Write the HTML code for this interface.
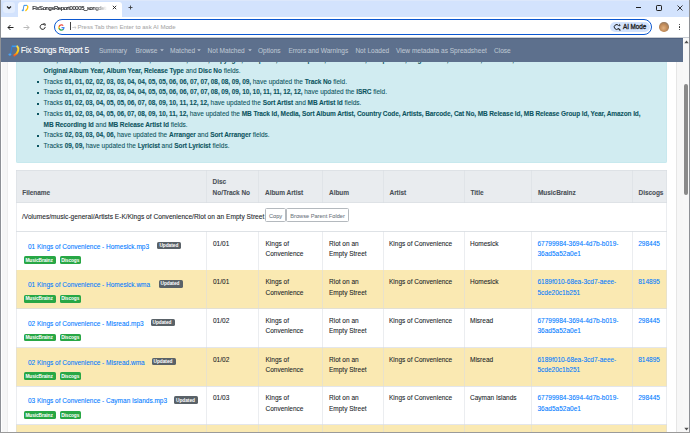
<!DOCTYPE html>
<html><head><meta charset="utf-8"><style>
html,body{margin:0;padding:0;}
body{width:690px;height:433px;overflow:hidden;position:relative;background:#fff;font-family:"Liberation Sans", sans-serif;}
.t{position:absolute;white-space:nowrap;font-family:"Liberation Sans", sans-serif;-webkit-text-stroke:0.08px currentColor;}
.t b{font-weight:bold;letter-spacing:-0.1px;}
.r{position:absolute;}
.btn{position:absolute;box-sizing:border-box;border:0.7px solid #b4b9be;border-radius:1.5px;background:#fff;}
.bdg{position:absolute;border-radius:1.6px;}
.caret{display:inline-block;width:0;height:0;margin-left:1.9px;vertical-align:2.1px;border-top:2px solid;border-left:1.8px solid transparent;border-right:1.8px solid transparent;}
</style></head><body>
<div class="r" style="left:1.00px;top:38.00px;width:682.00px;height:395.00px;background:#ffffff;"></div>
<div class="r" style="left:2.00px;top:38.00px;width:5.60px;height:395.00px;background:#f6f6f6;"></div>
<div class="r" style="left:7.40px;top:38.00px;width:0.60px;height:395.00px;background:#eeeeee;"></div>
<div class="r" style="left:676.00px;top:38.00px;width:0.80px;height:395.00px;background:#e6e6e6;"></div>
<div class="r" style="left:676.80px;top:38.00px;width:6.20px;height:395.00px;background:#f7f7f7;"></div>
<div class="r" style="left:16.00px;top:40.00px;width:651.00px;height:122.60px;background:#d1ecf1;border-radius:2px;box-shadow:inset 0 0 0 0.5px #bee5eb;"></div>
<div class="t" style="left:43.60px;top:57.30px;font-size:6.5px;line-height:6.5px;font-weight:normal;color:#0c5460;word-spacing:0px;"><b>Title, Album, Artist, Track, Sort Title, Sort Album, Genre, Copyright, Composer, Sort Composer, Album Artist, Compilation, Original Year, Sort Artist, Publisher,</b></div>
<div class="t" style="left:43.60px;top:68.00px;font-size:6.5px;line-height:6.5px;font-weight:normal;color:#0c5460;word-spacing:0px;"><b>Original Album Year, Album Year, Release Type</b> and <b>Disc No</b> fields.</div>
<div class="t" style="left:43.60px;top:78.70px;font-size:6.5px;line-height:6.5px;font-weight:normal;color:#0c5460;word-spacing:0px;">Tracks <b>01, 01, 02, 02, 03, 03, 04, 04, 05, 05, 06, 06, 07, 07, 08, 08, 09, 09,</b> have updated the <b>Track No</b> field.</div>
<div class="t" style="left:43.60px;top:89.40px;font-size:6.5px;line-height:6.5px;font-weight:normal;color:#0c5460;word-spacing:0px;">Tracks <b>01, 01, 02, 02, 03, 03, 04, 04, 05, 05, 06, 06, 07, 07, 08, 09, 09, 10, 10, 11, 11, 12, 12,</b> have updated the <b>ISRC</b> field.</div>
<div class="t" style="left:43.60px;top:100.10px;font-size:6.5px;line-height:6.5px;font-weight:normal;color:#0c5460;word-spacing:0px;">Tracks <b>01, 02, 03, 04, 05, 05, 06, 07, 08, 09, 10, 11, 12, 12,</b> have updated the <b>Sort Artist</b> and <b>MB Artist Id</b> fields.</div>
<div class="t" style="left:43.60px;top:110.80px;font-size:6.5px;line-height:6.5px;font-weight:normal;color:#0c5460;word-spacing:0px;">Tracks <b>01, 02, 03, 04, 05, 06, 07, 08, 09, 10, 11, 12,</b> have updated the <b>MB Track Id, Media, Sort Album Artist, Country Code, Artists, Barcode, Cat No, MB Release Id, MB Release Group Id, Year, Amazon Id,</b></div>
<div class="t" style="left:43.60px;top:121.50px;font-size:6.5px;line-height:6.5px;font-weight:normal;color:#0c5460;word-spacing:0px;"><b>MB Recording Id</b> and <b>MB Release Artist Id</b> fields.</div>
<div class="t" style="left:43.60px;top:132.20px;font-size:6.5px;line-height:6.5px;font-weight:normal;color:#0c5460;word-spacing:0px;">Tracks <b>02, 03, 03, 04, 06,</b> have updated the <b>Arranger</b> and <b>Sort Arranger</b> fields.</div>
<div class="t" style="left:43.60px;top:142.90px;font-size:6.5px;line-height:6.5px;font-weight:normal;color:#0c5460;word-spacing:0px;">Tracks <b>09, 09,</b> have updated the <b>Lyricist</b> and <b>Sort Lyricist</b> fields.</div>
<div class="r" style="left:37.00px;top:81.00px;width:1.60px;height:1.60px;background:#0c5460;"></div>
<div class="r" style="left:37.00px;top:92.00px;width:1.60px;height:1.60px;background:#0c5460;"></div>
<div class="r" style="left:37.00px;top:103.00px;width:1.60px;height:1.60px;background:#0c5460;"></div>
<div class="r" style="left:37.00px;top:113.00px;width:1.60px;height:1.60px;background:#0c5460;"></div>
<div class="r" style="left:37.00px;top:135.00px;width:1.60px;height:1.60px;background:#0c5460;"></div>
<div class="r" style="left:37.00px;top:145.00px;width:1.60px;height:1.60px;background:#0c5460;"></div>
<div class="r" style="left:16.00px;top:170.00px;width:651.00px;height:33.00px;background:#e9ecef;"></div>
<div class="r" style="left:16.00px;top:170.00px;width:651.00px;height:0.60px;background:#dee2e6;"></div>
<div class="r" style="left:16.00px;top:202.20px;width:651.00px;height:1.00px;background:#dee2e6;"></div>
<div class="t" style="left:22.30px;top:189.60px;font-size:6.5px;line-height:6.5px;font-weight:bold;color:#495057;letter-spacing:-0.05px;">Filename</div>
<div class="t" style="left:212.60px;top:179.00px;font-size:6.5px;line-height:6.5px;font-weight:bold;color:#495057;letter-spacing:-0.05px;">Disc</div>
<div class="t" style="left:212.60px;top:189.60px;font-size:6.5px;line-height:6.5px;font-weight:bold;color:#495057;letter-spacing:-0.05px;">No/Track No</div>
<div class="t" style="left:265.00px;top:189.60px;font-size:6.5px;line-height:6.5px;font-weight:bold;color:#495057;letter-spacing:-0.05px;">Album Artist</div>
<div class="t" style="left:329.00px;top:189.60px;font-size:6.5px;line-height:6.5px;font-weight:bold;color:#495057;letter-spacing:-0.05px;">Album</div>
<div class="t" style="left:389.50px;top:189.60px;font-size:6.5px;line-height:6.5px;font-weight:bold;color:#495057;letter-spacing:-0.05px;">Artist</div>
<div class="t" style="left:470.50px;top:189.60px;font-size:6.5px;line-height:6.5px;font-weight:bold;color:#495057;letter-spacing:-0.05px;">Title</div>
<div class="t" style="left:538.00px;top:189.60px;font-size:6.5px;line-height:6.5px;font-weight:bold;color:#495057;letter-spacing:-0.05px;">MusicBrainz</div>
<div class="t" style="left:638.50px;top:189.60px;font-size:6.5px;line-height:6.5px;font-weight:bold;color:#495057;letter-spacing:-0.05px;">Discogs</div>
<div class="r" style="left:16.00px;top:231.00px;width:651.00px;height:0.60px;background:#dee2e6;"></div>
<div class="t" style="left:22.00px;top:213.79px;font-size:6.63px;line-height:6.63px;font-weight:normal;color:#212529;">/Volumes/music-general/Artists E-K/Kings of Convenience/Riot on an Empty Street</div>
<div class="btn" style="left:265px;top:208.3px;width:20.8px;height:13.8px;"></div>
<div class="t" style="left:269.00px;top:214.22px;font-size:5.65px;line-height:5.65px;font-weight:normal;color:#6c757d;-webkit-text-stroke:0.05px currentColor;">Copy</div>
<div class="btn" style="left:286.4px;top:208.3px;width:62.6px;height:13.8px;"></div>
<div class="t" style="left:290.30px;top:214.22px;font-size:5.65px;line-height:5.65px;font-weight:normal;color:#6c757d;-webkit-text-stroke:0.05px currentColor;">Browse Parent Folder</div>
<div class="r" style="left:16.00px;top:269.60px;width:651.00px;height:0.70px;background:rgba(215,220,226,0.7);"></div>
<div class="t" style="left:28.00px;top:243.50px;font-size:6.5px;line-height:6.5px;font-weight:normal;color:#007bff;">01 Kings of Convenience - Homesick.mp3</div>
<div class="bdg" style="left:157.40px;top:241.50px;width:24px;height:7.5px;background:#5a6268;"></div>
<div class="t" style="left:159.40px;top:243.74px;font-size:4.8px;line-height:4.8px;font-weight:bold;color:#ffffff;letter-spacing:-0.04px;-webkit-text-stroke:0;">Updated</div>
<div class="bdg" style="left:24px;top:256.30px;width:31.8px;height:7.7px;background:#28a745;"></div>
<div class="t" style="left:25.40px;top:258.74px;font-size:4.8px;line-height:4.8px;font-weight:bold;color:#ffffff;letter-spacing:-0.08px;-webkit-text-stroke:0;">MusicBrainz</div>
<div class="bdg" style="left:59.6px;top:256.30px;width:21.3px;height:7.7px;background:#28a745;"></div>
<div class="t" style="left:61.20px;top:258.74px;font-size:4.8px;line-height:4.8px;font-weight:bold;color:#ffffff;letter-spacing:-0.08px;-webkit-text-stroke:0;">Discogs</div>
<div class="t" style="left:213.00px;top:240.50px;font-size:6.5px;line-height:6.5px;font-weight:normal;color:#212529;">01/01</div>
<div class="t" style="left:265.50px;top:240.50px;font-size:6.5px;line-height:6.5px;font-weight:normal;color:#212529;">Kings of</div>
<div class="t" style="left:265.50px;top:250.90px;font-size:6.5px;line-height:6.5px;font-weight:normal;color:#212529;">Convenience</div>
<div class="t" style="left:329.00px;top:240.50px;font-size:6.5px;line-height:6.5px;font-weight:normal;color:#212529;">Riot on an</div>
<div class="t" style="left:329.00px;top:250.90px;font-size:6.5px;line-height:6.5px;font-weight:normal;color:#212529;">Empty Street</div>
<div class="t" style="left:389.00px;top:240.50px;font-size:6.5px;line-height:6.5px;font-weight:normal;color:#212529;">Kings of Convenience</div>
<div class="t" style="left:470.00px;top:240.50px;font-size:6.5px;line-height:6.5px;font-weight:normal;color:#212529;">Homesick</div>
<div class="t" style="left:537.50px;top:240.50px;font-size:6.5px;line-height:6.5px;font-weight:normal;color:#007bff;">67799984-3694-4d7b-b019-</div>
<div class="t" style="left:537.50px;top:250.90px;font-size:6.5px;line-height:6.5px;font-weight:normal;color:#007bff;">36ad5a52a0e1</div>
<div class="t" style="left:638.20px;top:240.50px;font-size:6.5px;line-height:6.5px;font-weight:normal;color:#007bff;">298445</div>
<div class="r" style="left:16.00px;top:270.30px;width:651.00px;height:38.40px;background:#fae9b2;"></div>
<div class="r" style="left:16.00px;top:308.30px;width:651.00px;height:0.70px;background:rgba(215,220,226,0.7);"></div>
<div class="t" style="left:28.00px;top:282.20px;font-size:6.5px;line-height:6.5px;font-weight:normal;color:#007bff;">01 Kings of Convenience - Homesick.wma</div>
<div class="bdg" style="left:158.50px;top:280.20px;width:24px;height:7.5px;background:#5a6268;"></div>
<div class="t" style="left:160.50px;top:282.44px;font-size:4.8px;line-height:4.8px;font-weight:bold;color:#ffffff;letter-spacing:-0.04px;-webkit-text-stroke:0;">Updated</div>
<div class="bdg" style="left:24px;top:295.00px;width:31.8px;height:7.7px;background:#28a745;"></div>
<div class="t" style="left:25.40px;top:297.44px;font-size:4.8px;line-height:4.8px;font-weight:bold;color:#ffffff;letter-spacing:-0.08px;-webkit-text-stroke:0;">MusicBrainz</div>
<div class="bdg" style="left:59.6px;top:295.00px;width:21.3px;height:7.7px;background:#28a745;"></div>
<div class="t" style="left:61.20px;top:297.44px;font-size:4.8px;line-height:4.8px;font-weight:bold;color:#ffffff;letter-spacing:-0.08px;-webkit-text-stroke:0;">Discogs</div>
<div class="t" style="left:213.00px;top:279.20px;font-size:6.5px;line-height:6.5px;font-weight:normal;color:#212529;">01/01</div>
<div class="t" style="left:265.50px;top:279.20px;font-size:6.5px;line-height:6.5px;font-weight:normal;color:#212529;">Kings of</div>
<div class="t" style="left:265.50px;top:289.60px;font-size:6.5px;line-height:6.5px;font-weight:normal;color:#212529;">Convenience</div>
<div class="t" style="left:329.00px;top:279.20px;font-size:6.5px;line-height:6.5px;font-weight:normal;color:#212529;">Riot on an</div>
<div class="t" style="left:329.00px;top:289.60px;font-size:6.5px;line-height:6.5px;font-weight:normal;color:#212529;">Empty Street</div>
<div class="t" style="left:389.00px;top:279.20px;font-size:6.5px;line-height:6.5px;font-weight:normal;color:#212529;">Kings of Convenience</div>
<div class="t" style="left:470.00px;top:279.20px;font-size:6.5px;line-height:6.5px;font-weight:normal;color:#212529;">Homesick</div>
<div class="t" style="left:537.50px;top:279.20px;font-size:6.5px;line-height:6.5px;font-weight:normal;color:#007bff;">6189f010-68ea-3cd7-aeee-</div>
<div class="t" style="left:537.50px;top:289.60px;font-size:6.5px;line-height:6.5px;font-weight:normal;color:#007bff;">5cde20c1b251</div>
<div class="t" style="left:638.20px;top:279.20px;font-size:6.5px;line-height:6.5px;font-weight:normal;color:#007bff;">814895</div>
<div class="r" style="left:16.00px;top:347.00px;width:651.00px;height:0.70px;background:rgba(215,220,226,0.7);"></div>
<div class="t" style="left:28.00px;top:320.90px;font-size:6.5px;line-height:6.5px;font-weight:normal;color:#007bff;">02 Kings of Convenience - Misread.mp3</div>
<div class="bdg" style="left:150.50px;top:318.90px;width:24px;height:7.5px;background:#5a6268;"></div>
<div class="t" style="left:152.50px;top:321.14px;font-size:4.8px;line-height:4.8px;font-weight:bold;color:#ffffff;letter-spacing:-0.04px;-webkit-text-stroke:0;">Updated</div>
<div class="bdg" style="left:24px;top:333.70px;width:31.8px;height:7.7px;background:#28a745;"></div>
<div class="t" style="left:25.40px;top:336.14px;font-size:4.8px;line-height:4.8px;font-weight:bold;color:#ffffff;letter-spacing:-0.08px;-webkit-text-stroke:0;">MusicBrainz</div>
<div class="bdg" style="left:59.6px;top:333.70px;width:21.3px;height:7.7px;background:#28a745;"></div>
<div class="t" style="left:61.20px;top:336.14px;font-size:4.8px;line-height:4.8px;font-weight:bold;color:#ffffff;letter-spacing:-0.08px;-webkit-text-stroke:0;">Discogs</div>
<div class="t" style="left:213.00px;top:317.90px;font-size:6.5px;line-height:6.5px;font-weight:normal;color:#212529;">01/02</div>
<div class="t" style="left:265.50px;top:317.90px;font-size:6.5px;line-height:6.5px;font-weight:normal;color:#212529;">Kings of</div>
<div class="t" style="left:265.50px;top:328.30px;font-size:6.5px;line-height:6.5px;font-weight:normal;color:#212529;">Convenience</div>
<div class="t" style="left:329.00px;top:317.90px;font-size:6.5px;line-height:6.5px;font-weight:normal;color:#212529;">Riot on an</div>
<div class="t" style="left:329.00px;top:328.30px;font-size:6.5px;line-height:6.5px;font-weight:normal;color:#212529;">Empty Street</div>
<div class="t" style="left:389.00px;top:317.90px;font-size:6.5px;line-height:6.5px;font-weight:normal;color:#212529;">Kings of Convenience</div>
<div class="t" style="left:470.00px;top:317.90px;font-size:6.5px;line-height:6.5px;font-weight:normal;color:#212529;">Misread</div>
<div class="t" style="left:537.50px;top:317.90px;font-size:6.5px;line-height:6.5px;font-weight:normal;color:#007bff;">67799984-3694-4d7b-b019-</div>
<div class="t" style="left:537.50px;top:328.30px;font-size:6.5px;line-height:6.5px;font-weight:normal;color:#007bff;">36ad5a52a0e1</div>
<div class="t" style="left:638.20px;top:317.90px;font-size:6.5px;line-height:6.5px;font-weight:normal;color:#007bff;">298445</div>
<div class="r" style="left:16.00px;top:347.70px;width:651.00px;height:38.40px;background:#fae9b2;"></div>
<div class="r" style="left:16.00px;top:385.70px;width:651.00px;height:0.70px;background:rgba(215,220,226,0.7);"></div>
<div class="t" style="left:28.00px;top:359.60px;font-size:6.5px;line-height:6.5px;font-weight:normal;color:#007bff;">02 Kings of Convenience - Misread.wma</div>
<div class="bdg" style="left:151.50px;top:357.60px;width:24px;height:7.5px;background:#5a6268;"></div>
<div class="t" style="left:153.50px;top:359.84px;font-size:4.8px;line-height:4.8px;font-weight:bold;color:#ffffff;letter-spacing:-0.04px;-webkit-text-stroke:0;">Updated</div>
<div class="bdg" style="left:24px;top:372.40px;width:31.8px;height:7.7px;background:#28a745;"></div>
<div class="t" style="left:25.40px;top:374.84px;font-size:4.8px;line-height:4.8px;font-weight:bold;color:#ffffff;letter-spacing:-0.08px;-webkit-text-stroke:0;">MusicBrainz</div>
<div class="bdg" style="left:59.6px;top:372.40px;width:21.3px;height:7.7px;background:#28a745;"></div>
<div class="t" style="left:61.20px;top:374.84px;font-size:4.8px;line-height:4.8px;font-weight:bold;color:#ffffff;letter-spacing:-0.08px;-webkit-text-stroke:0;">Discogs</div>
<div class="t" style="left:213.00px;top:356.60px;font-size:6.5px;line-height:6.5px;font-weight:normal;color:#212529;">01/02</div>
<div class="t" style="left:265.50px;top:356.60px;font-size:6.5px;line-height:6.5px;font-weight:normal;color:#212529;">Kings of</div>
<div class="t" style="left:265.50px;top:367.00px;font-size:6.5px;line-height:6.5px;font-weight:normal;color:#212529;">Convenience</div>
<div class="t" style="left:329.00px;top:356.60px;font-size:6.5px;line-height:6.5px;font-weight:normal;color:#212529;">Riot on an</div>
<div class="t" style="left:329.00px;top:367.00px;font-size:6.5px;line-height:6.5px;font-weight:normal;color:#212529;">Empty Street</div>
<div class="t" style="left:389.00px;top:356.60px;font-size:6.5px;line-height:6.5px;font-weight:normal;color:#212529;">Kings of Convenience</div>
<div class="t" style="left:470.00px;top:356.60px;font-size:6.5px;line-height:6.5px;font-weight:normal;color:#212529;">Misread</div>
<div class="t" style="left:537.50px;top:356.60px;font-size:6.5px;line-height:6.5px;font-weight:normal;color:#007bff;">6189f010-68ea-3cd7-aeee-</div>
<div class="t" style="left:537.50px;top:367.00px;font-size:6.5px;line-height:6.5px;font-weight:normal;color:#007bff;">5cde20c1b251</div>
<div class="t" style="left:638.20px;top:356.60px;font-size:6.5px;line-height:6.5px;font-weight:normal;color:#007bff;">814895</div>
<div class="r" style="left:16.00px;top:424.40px;width:651.00px;height:0.70px;background:rgba(215,220,226,0.7);"></div>
<div class="t" style="left:28.00px;top:398.30px;font-size:6.5px;line-height:6.5px;font-weight:normal;color:#007bff;">03 Kings of Convenience - Cayman Islands.mp3</div>
<div class="bdg" style="left:174.00px;top:396.30px;width:24px;height:7.5px;background:#5a6268;"></div>
<div class="t" style="left:176.00px;top:398.54px;font-size:4.8px;line-height:4.8px;font-weight:bold;color:#ffffff;letter-spacing:-0.04px;-webkit-text-stroke:0;">Updated</div>
<div class="bdg" style="left:24px;top:411.10px;width:31.8px;height:7.7px;background:#28a745;"></div>
<div class="t" style="left:25.40px;top:413.54px;font-size:4.8px;line-height:4.8px;font-weight:bold;color:#ffffff;letter-spacing:-0.08px;-webkit-text-stroke:0;">MusicBrainz</div>
<div class="bdg" style="left:59.6px;top:411.10px;width:21.3px;height:7.7px;background:#28a745;"></div>
<div class="t" style="left:61.20px;top:413.54px;font-size:4.8px;line-height:4.8px;font-weight:bold;color:#ffffff;letter-spacing:-0.08px;-webkit-text-stroke:0;">Discogs</div>
<div class="t" style="left:213.00px;top:395.30px;font-size:6.5px;line-height:6.5px;font-weight:normal;color:#212529;">01/03</div>
<div class="t" style="left:265.50px;top:395.30px;font-size:6.5px;line-height:6.5px;font-weight:normal;color:#212529;">Kings of</div>
<div class="t" style="left:265.50px;top:405.70px;font-size:6.5px;line-height:6.5px;font-weight:normal;color:#212529;">Convenience</div>
<div class="t" style="left:329.00px;top:395.30px;font-size:6.5px;line-height:6.5px;font-weight:normal;color:#212529;">Riot on an</div>
<div class="t" style="left:329.00px;top:405.70px;font-size:6.5px;line-height:6.5px;font-weight:normal;color:#212529;">Empty Street</div>
<div class="t" style="left:389.00px;top:395.30px;font-size:6.5px;line-height:6.5px;font-weight:normal;color:#212529;">Kings of Convenience</div>
<div class="t" style="left:470.00px;top:395.30px;font-size:6.5px;line-height:6.5px;font-weight:normal;color:#212529;">Cayman Islands</div>
<div class="t" style="left:537.50px;top:395.30px;font-size:6.5px;line-height:6.5px;font-weight:normal;color:#007bff;">67799984-3694-4d7b-b019-</div>
<div class="t" style="left:537.50px;top:405.70px;font-size:6.5px;line-height:6.5px;font-weight:normal;color:#007bff;">36ad5a52a0e1</div>
<div class="t" style="left:638.20px;top:395.30px;font-size:6.5px;line-height:6.5px;font-weight:normal;color:#007bff;">298445</div>
<div class="r" style="left:16.00px;top:425.10px;width:651.00px;height:38.40px;background:#fae9b2;"></div>
<div class="r" style="left:16.00px;top:463.10px;width:651.00px;height:0.70px;background:rgba(215,220,226,0.7);"></div>
<div class="t" style="left:28.00px;top:437.00px;font-size:6.5px;line-height:6.5px;font-weight:normal;color:#007bff;">04 Kings of Convenience - Love Is No Big Truth.mp3</div>
<div class="bdg" style="left:190.00px;top:435.00px;width:24px;height:7.5px;background:#5a6268;"></div>
<div class="t" style="left:192.00px;top:437.24px;font-size:4.8px;line-height:4.8px;font-weight:bold;color:#ffffff;letter-spacing:-0.04px;-webkit-text-stroke:0;">Updated</div>
<div class="bdg" style="left:24px;top:449.80px;width:31.8px;height:7.7px;background:#28a745;"></div>
<div class="t" style="left:25.40px;top:452.24px;font-size:4.8px;line-height:4.8px;font-weight:bold;color:#ffffff;letter-spacing:-0.08px;-webkit-text-stroke:0;">MusicBrainz</div>
<div class="bdg" style="left:59.6px;top:449.80px;width:21.3px;height:7.7px;background:#28a745;"></div>
<div class="t" style="left:61.20px;top:452.24px;font-size:4.8px;line-height:4.8px;font-weight:bold;color:#ffffff;letter-spacing:-0.08px;-webkit-text-stroke:0;">Discogs</div>
<div class="t" style="left:213.00px;top:434.00px;font-size:6.5px;line-height:6.5px;font-weight:normal;color:#212529;">01/04</div>
<div class="t" style="left:265.50px;top:434.00px;font-size:6.5px;line-height:6.5px;font-weight:normal;color:#212529;">Kings of</div>
<div class="t" style="left:265.50px;top:444.40px;font-size:6.5px;line-height:6.5px;font-weight:normal;color:#212529;">Convenience</div>
<div class="t" style="left:329.00px;top:434.00px;font-size:6.5px;line-height:6.5px;font-weight:normal;color:#212529;">Riot on an</div>
<div class="t" style="left:329.00px;top:444.40px;font-size:6.5px;line-height:6.5px;font-weight:normal;color:#212529;">Empty Street</div>
<div class="t" style="left:389.00px;top:434.00px;font-size:6.5px;line-height:6.5px;font-weight:normal;color:#212529;">Kings of Convenience</div>
<div class="t" style="left:470.00px;top:434.00px;font-size:6.5px;line-height:6.5px;font-weight:normal;color:#212529;">Love Is No Big Truth</div>
<div class="t" style="left:537.50px;top:434.00px;font-size:6.5px;line-height:6.5px;font-weight:normal;color:#007bff;">6189f010-68ea-3cd7-aeee-</div>
<div class="t" style="left:537.50px;top:444.40px;font-size:6.5px;line-height:6.5px;font-weight:normal;color:#007bff;">5cde20c1b251</div>
<div class="t" style="left:638.20px;top:434.00px;font-size:6.5px;line-height:6.5px;font-weight:normal;color:#007bff;">814895</div>
<div class="r" style="left:16.00px;top:170.00px;width:1.00px;height:33.00px;background:rgba(215,220,226,0.5);"></div>
<div class="r" style="left:16.00px;top:231.30px;width:1.00px;height:202.00px;background:rgba(215,220,226,0.5);"></div>
<div class="r" style="left:206.00px;top:170.00px;width:1.00px;height:33.00px;background:rgba(215,220,226,0.5);"></div>
<div class="r" style="left:206.00px;top:231.30px;width:1.00px;height:202.00px;background:rgba(215,220,226,0.5);"></div>
<div class="r" style="left:258.00px;top:170.00px;width:1.00px;height:33.00px;background:rgba(215,220,226,0.5);"></div>
<div class="r" style="left:258.00px;top:231.30px;width:1.00px;height:202.00px;background:rgba(215,220,226,0.5);"></div>
<div class="r" style="left:322.00px;top:170.00px;width:1.00px;height:33.00px;background:rgba(215,220,226,0.5);"></div>
<div class="r" style="left:322.00px;top:231.30px;width:1.00px;height:202.00px;background:rgba(215,220,226,0.5);"></div>
<div class="r" style="left:383.00px;top:170.00px;width:1.00px;height:33.00px;background:rgba(215,220,226,0.5);"></div>
<div class="r" style="left:383.00px;top:231.30px;width:1.00px;height:202.00px;background:rgba(215,220,226,0.5);"></div>
<div class="r" style="left:464.00px;top:170.00px;width:1.00px;height:33.00px;background:rgba(215,220,226,0.5);"></div>
<div class="r" style="left:464.00px;top:231.30px;width:1.00px;height:202.00px;background:rgba(215,220,226,0.5);"></div>
<div class="r" style="left:531.00px;top:170.00px;width:1.00px;height:33.00px;background:rgba(215,220,226,0.5);"></div>
<div class="r" style="left:531.00px;top:231.30px;width:1.00px;height:202.00px;background:rgba(215,220,226,0.5);"></div>
<div class="r" style="left:632.00px;top:170.00px;width:1.00px;height:33.00px;background:rgba(215,220,226,0.5);"></div>
<div class="r" style="left:632.00px;top:231.30px;width:1.00px;height:202.00px;background:rgba(215,220,226,0.5);"></div>
<div class="r" style="left:666.00px;top:170.00px;width:1.00px;height:33.00px;background:rgba(215,220,226,0.5);"></div>
<div class="r" style="left:666.00px;top:231.30px;width:1.00px;height:202.00px;background:rgba(215,220,226,0.5);"></div>
<div class="r" style="left:16.00px;top:203.00px;width:1.00px;height:28.30px;background:rgba(215,220,226,0.5);"></div>
<div class="r" style="left:666.00px;top:203.00px;width:1.00px;height:28.30px;background:rgba(215,220,226,0.5);"></div>
<div class="r" style="left:1.00px;top:37.50px;width:682.00px;height:24.50px;background:#5d708d;"></div>
<div class="r" style="left:1.00px;top:37.50px;width:682.00px;height:0.80px;background:#4f6180;"></div>
<svg class="r" style="left:7px;top:43.5px" width="14" height="14" viewBox="0 0 14 14">
<defs><linearGradient id="lg" x1="0" y1="0" x2="0" y2="1"><stop offset="0" stop-color="#ffe04a"/><stop offset="0.7" stop-color="#ffc400"/><stop offset="1" stop-color="#ff5a1f"/></linearGradient></defs>
<path d="M4.8 2.3 L10.2 2.3" stroke="#3d9bf0" stroke-width="1.6" fill="none"/>
<path d="M4.9 2.3 L3.6 10.2" stroke="#2f7fd8" stroke-width="1.1" fill="none"/>
<ellipse cx="2.9" cy="10.6" rx="1.5" ry="1.1" fill="#4aa3f5"/>
<path d="M10.3 2.4 C12.2 4.2 11.8 8.5 7.4 11.4" stroke="url(#lg)" stroke-width="2.0" fill="none" stroke-linecap="round"/>
</svg>
<div class="t" style="left:20.80px;top:46.32px;font-size:8.6px;line-height:8.6px;font-weight:normal;color:#ffffff;letter-spacing:-0.3px;">Fix Songs Report 5</div>
<div class="t" style="left:99.00px;top:47.96px;font-size:6.55px;line-height:6.55px;font-weight:normal;color:#bac3d0;">Summary</div>
<div class="t" style="left:135.60px;top:47.96px;font-size:6.55px;line-height:6.55px;font-weight:normal;color:#bac3d0;">Browse</div>
<svg class="r" style="left:159.6px;top:49.2px" width="4" height="2.5" viewBox="0 0 4 2.5"><path d="M0.2 0.3 L3.8 0.3 L2 2.3Z" fill="#bac3d0"/></svg>
<div class="t" style="left:170.00px;top:47.96px;font-size:6.55px;line-height:6.55px;font-weight:normal;color:#bac3d0;">Matched</div>
<svg class="r" style="left:196.8px;top:49.2px" width="4" height="2.5" viewBox="0 0 4 2.5"><path d="M0.2 0.3 L3.8 0.3 L2 2.3Z" fill="#bac3d0"/></svg>
<div class="t" style="left:207.60px;top:47.96px;font-size:6.55px;line-height:6.55px;font-weight:normal;color:#bac3d0;">Not Matched</div>
<svg class="r" style="left:248.0px;top:49.2px" width="4" height="2.5" viewBox="0 0 4 2.5"><path d="M0.2 0.3 L3.8 0.3 L2 2.3Z" fill="#bac3d0"/></svg>
<div class="t" style="left:258.00px;top:47.96px;font-size:6.55px;line-height:6.55px;font-weight:normal;color:#bac3d0;">Options</div>
<div class="t" style="left:288.40px;top:47.96px;font-size:6.55px;line-height:6.55px;font-weight:normal;color:#bac3d0;">Errors and Warnings</div>
<div class="t" style="left:355.40px;top:47.96px;font-size:6.55px;line-height:6.55px;font-weight:normal;color:#bac3d0;">Not Loaded</div>
<div class="t" style="left:396.00px;top:47.96px;font-size:6.55px;line-height:6.55px;font-weight:normal;color:#bac3d0;">View metadata as Spreadsheet</div>
<div class="t" style="left:494.00px;top:47.96px;font-size:6.55px;line-height:6.55px;font-weight:normal;color:#bac3d0;">Close</div>
<div class="r" style="left:683.00px;top:38.00px;width:6.00px;height:395.00px;background:#f8f8f8;"></div>
<svg class="r" style="left:684px;top:39.5px" width="5" height="4" viewBox="0 0 5 4"><path d="M0.3 3.3 L2.5 0.6 L4.7 3.3Z" fill="#505050"/></svg>
<div class="r" style="left:684.30px;top:83.60px;width:3.80px;height:111.40px;background:#8a8a8a;border-radius:2px;"></div>
<svg class="r" style="left:684px;top:426.5px" width="5" height="4" viewBox="0 0 5 4"><path d="M0.3 0.7 L2.5 3.4 L4.7 0.7Z" fill="#505050"/></svg>
<div class="r" style="left:0.00px;top:0.00px;width:690.00px;height:17.00px;background:#d3e3fd;"></div>
<div class="r" style="left:0.00px;top:0.00px;width:690.00px;height:1.00px;background:#dde8fb;"></div>
<div class="r" style="left:3.30px;top:2.00px;width:11.40px;height:11.30px;background:#e3edfd;border-radius:3px;"></div>
<svg class="r" style="left:6px;top:5px" width="6" height="5" viewBox="0 0 6 5"><path d="M1 1.5 L3 3.5 L5 1.5" stroke="#1f1f1f" stroke-width="1.2" fill="none"/></svg>
<div class="r" style="left:17.50px;top:2.00px;width:104.00px;height:16.00px;background:#ffffff;border-radius:3px 3px 0 0;"></div>
<svg class="r" style="left:20.8px;top:3.6px" width="8.4" height="8.4" viewBox="0 0 14 14"><path d="M4.8 2.3 L10.2 2.3" stroke="#3d9bf0" stroke-width="1.8" fill="none"/><path d="M4.9 2.3 L3.6 10.2" stroke="#2f7fd8" stroke-width="1.4" fill="none"/><ellipse cx="2.9" cy="10.6" rx="1.8" ry="1.4" fill="#4aa3f5"/><path d="M10.3 2.4 C12.2 4.2 11.8 8.5 7.4 11.4" stroke="#ffc400" stroke-width="2.2" fill="none"/></svg>
<div class="t" style="left:32.3px;top:4.8px;font-size:5.9px;line-height:7px;letter-spacing:-0.36px;color:#1f2124;width:75px;overflow:hidden;-webkit-text-stroke:0.2px currentColor;-webkit-mask-image:linear-gradient(to right,#000 80%,transparent);">FixSongsReport00005_songdetails</div>
<svg class="r" style="left:111.5px;top:5.2px" width="5" height="5" viewBox="0 0 5 5"><path d="M0.8 0.8 L4.2 4.2 M4.2 0.8 L0.8 4.2" stroke="#1f1f1f" stroke-width="0.9"/></svg>
<svg class="r" style="left:127.5px;top:5.2px" width="5" height="5" viewBox="0 0 5 5"><path d="M2.5 0.5 V4.5 M0.5 2.5 H4.5" stroke="#3c4043" stroke-width="0.9"/></svg>
<div class="r" style="left:635.50px;top:7.00px;width:5.50px;height:0.80px;background:#1f1f1f;"></div>
<div class="r" style="left:656px;top:4.5px;width:4px;height:4px;border:0.9px solid #1f1f1f;border-radius:1.2px;"></div>
<svg class="r" style="left:676.5px;top:4.5px" width="6" height="6" viewBox="0 0 6 6"><path d="M0.5 0.5 L5.5 5.5 M5.5 0.5 L0.5 5.5" stroke="#1f1f1f" stroke-width="0.9"/></svg>
<div class="r" style="left:0.00px;top:17.00px;width:690.00px;height:20.50px;background:#ffffff;"></div>
<div class="r" style="left:0.00px;top:36.80px;width:690.00px;height:0.70px;background:#c8ccd2;"></div>
<svg class="r" style="left:7px;top:23.5px" width="7" height="7" viewBox="0 0 7 7"><path d="M6.5 3.5 H1 M3.5 1 L1 3.5 L3.5 6" stroke="#1f1f1f" stroke-width="1" fill="none"/></svg>
<svg class="r" style="left:23px;top:23.5px" width="7" height="7" viewBox="0 0 7 7"><path d="M0.5 3.5 H6 M3.5 1 L6 3.5 L3.5 6" stroke="#b8b8b8" stroke-width="1" fill="none"/></svg>
<svg class="r" style="left:38.5px;top:23.3px" width="7.5" height="7.5" viewBox="0 0 8 8"><path d="M6.6 4.2 A2.7 2.7 0 1 1 5.6 2" stroke="#1f1f1f" stroke-width="1" fill="none"/><path d="M4.6 0.8 L6.6 1 L6.4 3" stroke="#1f1f1f" stroke-width="1" fill="none"/></svg>
<div class="r" style="left:53.5px;top:19.2px;width:596.5px;height:13.5px;border:1.3px solid #0b57d0;border-radius:8px;background:#fff;"></div>
<svg class="r" style="left:57.5px;top:23.5px" width="7" height="7" viewBox="0 0 24 24">
<path d="M22.5 12.3c0-.8-.1-1.5-.2-2.2H12v4.3h5.9c-.3 1.4-1 2.5-2.2 3.300v2.700h3.600c2.100-1.900 3.200-4.800 3.200-8.100z" fill="#4285f4"/>
<path d="M12 23c2.970 0 5.460-1 7.280-2.660l-3.570-2.770c-.98.660-2.230 1.050-3.710 1.050-2.860 0-5.290-1.930-6.160-4.530H2.180v2.840C3.990 20.530 7.700 23 12 23z" fill="#34a853"/>
<path d="M5.840 14.090c-.22-.66-.35-1.360-.35-2.090s.13-1.430.35-2.090V7.070H2.180C1.430 8.550 1 10.220 1 12s.43 3.450 1.180 4.930l3.660-2.840z" fill="#fbbc05"/>
<path d="M12 5.380c1.620 0 3.060.56 4.210 1.640l3.150-3.150C17.450 2.090 14.970 1 12 1 7.700 1 3.990 3.470 2.180 7.070l3.660 2.840c.87-2.600 3.300-4.530 6.160-4.530z" fill="#ea4335"/></svg>
<div class="r" style="left:69.70px;top:22.20px;width:0.70px;height:8.20px;background:#444;"></div>
<svg class="r" style="left:71.5px;top:24.5px" width="5" height="5" viewBox="0 0 5 5"><path d="M0.3 2.5 H4 M2.8 1.3 L4 2.5 L2.8 3.7" stroke="#c0c0c0" stroke-width="0.7" fill="none"/></svg>
<div class="t" style="left:77.50px;top:24.08px;font-size:6.05px;line-height:6.05px;font-weight:normal;color:#a9a9a9;-webkit-text-stroke:0.05px currentColor;">Press Tab then Enter to ask AI Mode</div>
<div class="r" style="left:610.00px;top:21.80px;width:40.00px;height:10.20px;background:#d3e3fd;border-radius:5px;"></div>
<svg class="r" style="left:612.5px;top:22.8px" width="9" height="9" viewBox="0 0 9 9"><path d="M5.6 2.6 A2.4 2.4 0 1 0 5.4 5.6" stroke="#1f1f1f" stroke-width="1" fill="none"/><path d="M5.2 5.3 L7.4 7.5" stroke="#1f1f1f" stroke-width="1.1"/><path d="M6.6 0.6 L7.0 1.8 L8.2 2.2 L7.0 2.6 L6.6 3.8 L6.2 2.6 L5.0 2.2 L6.2 1.8Z" fill="#1f1f1f"/></svg>
<div class="t" style="left:623.00px;top:24.47px;font-size:6.3px;line-height:6.3px;font-weight:normal;color:#1f1f1f;-webkit-text-stroke:0.3px currentColor;letter-spacing:-0.05px;">AI Mode</div>
<div class="r" style="left:659px;top:22px;width:9.5px;height:9.5px;border-radius:50%;background:radial-gradient(circle at 45% 60%, #e0b080 0%, #c08a58 45%, #8a7766 80%, #9aa0a8 100%);"></div>
<div class="r" style="left:679.00px;top:24.00px;width:1.30px;height:1.30px;background:#1f1f1f;border-radius:50%;"></div>
<div class="r" style="left:679.00px;top:26.30px;width:1.30px;height:1.30px;background:#1f1f1f;border-radius:50%;"></div>
<div class="r" style="left:679.00px;top:28.60px;width:1.30px;height:1.30px;background:#1f1f1f;border-radius:50%;"></div>
<div class="r" style="left:0.00px;top:0.00px;width:1.00px;height:433.00px;background:#8e9196;"></div>
<div class="r" style="left:689.00px;top:0.00px;width:1.00px;height:433.00px;background:#8e9196;"></div>
<div class="r" style="left:0.00px;top:432.20px;width:690.00px;height:0.80px;background:#9a9a9a;"></div>
</body></html>
